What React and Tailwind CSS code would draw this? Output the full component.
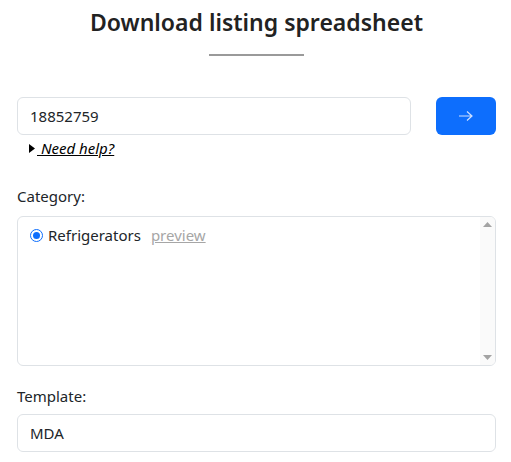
import React from 'react';

export default function App() {
    return (
        <div className="min-h-[462px] bg-white text-[#212529] font-['Noto_Sans','Open_Sans',sans-serif] text-[15px]">
            <div className="pl-[17px] pr-[15px] pt-[7px]">

                {/* Heading */}
                <h3 className="text-center text-[23px] font-semibold leading-[30px] text-[#222]">Download listing spreadsheet</h3>
                <div className="mx-auto mt-[17px] w-[95px] h-[2px] bg-[#9a9a9a]" />

                {/* Listing id row */}
                <div className="mt-[41px] flex items-start gap-[25px]">
                    <div className="flex-1">
                        <input
                            defaultValue="18852759"
                            className="w-full h-[38px] px-[12px] border border-[#dee2e6] rounded-[6px] outline-none text-[15px]"
                        />
                        <div className="mt-[4px] ml-[12px] flex items-center gap-[2px] text-[15px] leading-[18px]">
                            <svg width="6" height="9" viewBox="0 0 6 9"><path d="M0 0 6 4.5 0 9z" fill="#000" /></svg>
                            <a className="italic underline text-black">&nbsp;Need help?</a>
                        </div>
                    </div>
                    <button className="w-[60px] h-[38px] rounded-[6px] bg-[#0d6efd] flex items-center justify-center">
                        <svg width="16" height="12" viewBox="0 0 16 12" fill="none" stroke="#cfe0ff" strokeWidth="1.2">
                            <path d="M1 6h13M9 1.5 14 6l-5 4.5" />
                        </svg>
                    </button>
                </div>

                {/* Category */}
                <label className="block mt-[27px] leading-[24px]">Category:</label>
                <div className="mt-[8px] h-[150px] border border-[#dee2e6] rounded-[6px] flex overflow-hidden">
                    <div className="flex-1 pl-[12px] pt-[7px]">
                        <label className="flex items-center gap-[5px] leading-[22px]">
                            <span className="w-[13px] h-[13px] rounded-full border-[1.5px] border-[#0d6efd] flex items-center justify-center">
                                <span className="w-[7px] h-[7px] rounded-full bg-[#0d6efd]" />
                            </span>
                            <span>Refrigerators</span>
                            <a className="ml-[5px] text-[#a6a6a6] underline">preview</a>
                        </label>
                    </div>
                    <div className="w-[15px] bg-[#fafafa] flex flex-col items-center justify-between py-[5px]">
                        <svg width="9" height="5" viewBox="0 0 9 5"><path d="M0 5 4.5 0 9 5z" fill="#a3a3a3" /></svg>
                        <svg width="9" height="5" viewBox="0 0 9 5"><path d="M0 0h9L4.5 5z" fill="#a3a3a3" /></svg>
                    </div>
                </div>

                {/* Template */}
                <label className="block mt-[18px] leading-[24px]">Template:</label>
                <input
                    defaultValue="MDA"
                    className="mt-[6px] w-full h-[38px] px-[12px] border border-[#dee2e6] rounded-[6px] outline-none text-[15px]"
                />
            </div>
        </div>
    );
}
